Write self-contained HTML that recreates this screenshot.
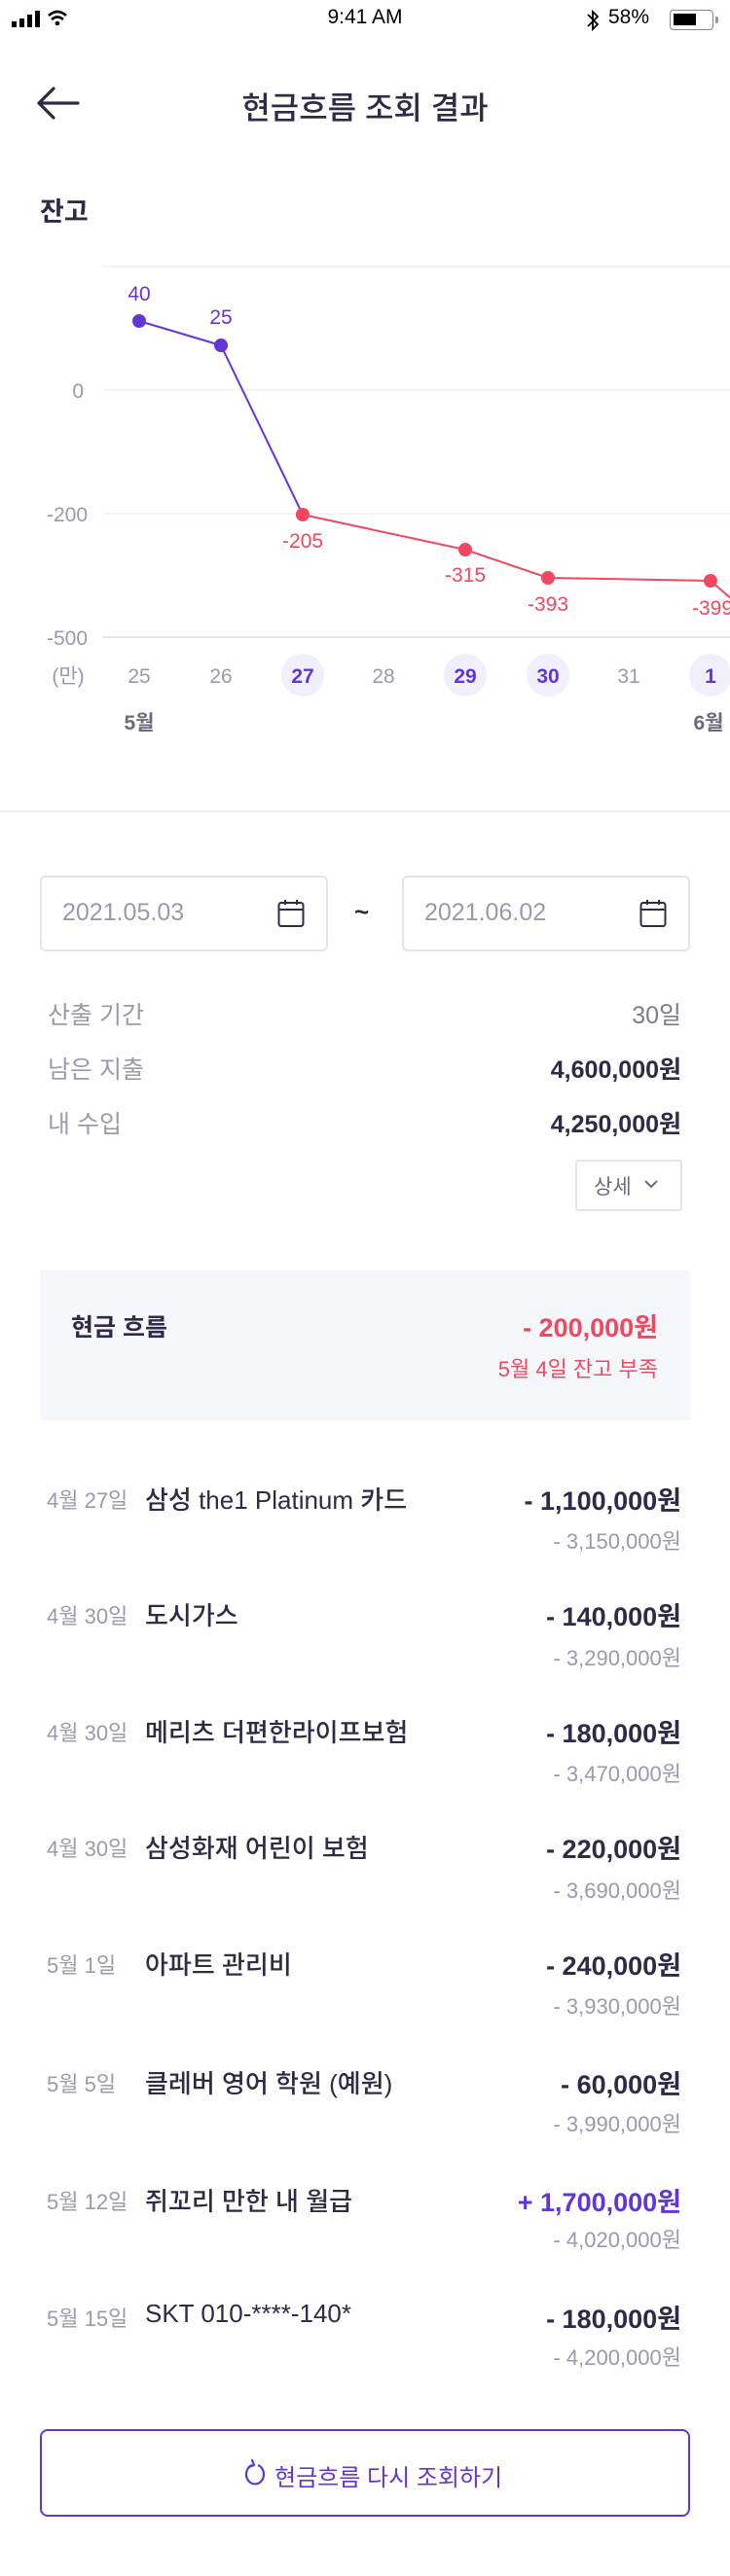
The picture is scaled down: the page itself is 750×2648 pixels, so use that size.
<!DOCTYPE html>
<html><head><meta charset="utf-8"><style>
*{margin:0;padding:0;box-sizing:border-box}
body{width:750px;height:2648px;background:#fff;position:relative;overflow:hidden;font-family:"Liberation Sans","Noto Sans CJK KR",sans-serif;color:#2d2b45}
.a{position:absolute;white-space:nowrap}
.r{text-align:right}
.c{text-align:center}
.g{color:#9b99aa}
.dk{color:#2d2b45}
.red{color:#f0485e}
.pu{color:#6236d6}
</style></head><body>
<!-- status bar -->
<svg class="a" style="left:10px;top:8px" width="70" height="24" viewBox="0 0 70 24">
<rect x="2" y="14" width="5" height="6" fill="#000"/><rect x="10" y="11" width="5" height="9" fill="#000"/><rect x="18" y="7" width="5" height="13" fill="#000"/><rect x="26" y="3" width="5" height="17" fill="#000"/>
<path d="M40 8 Q49 0 58 8" stroke="#000" stroke-width="2.6" fill="none"/><path d="M43 12 Q49 7 55 12" stroke="#000" stroke-width="2.6" fill="none"/><circle cx="49" cy="16" r="2.3" fill="#000"/>
</svg>
<div class="a c" style="left:0;width:750px;top:6px;font-size:21px;color:#000">9:41 AM</div>
<svg class="a" style="left:601px;top:9px" width="16" height="24" viewBox="0 0 16 24"><path d="M3 6 L13 16 L8 21 L8 3 L13 8 L3 18" stroke="#000" stroke-width="1.8" fill="none"/></svg>
<div class="a" style="left:625px;top:6px;font-size:21px;color:#000">58%</div>
<div class="a" style="left:688px;top:10px;width:45px;height:21px;border:1.5px solid #888;border-radius:4px"><div style="position:absolute;left:3px;top:3px;width:23px;height:12px;background:#000"></div></div>
<div class="a" style="left:735px;top:17px;width:3px;height:7px;background:#999;border-radius:0 2px 2px 0"></div>
<!-- header -->
<svg class="a" style="left:36px;top:88px" width="46" height="36" viewBox="0 0 46 36"><path d="M44 18 H4 M19 3 L4 18 L19 33" stroke="#2d2b45" stroke-width="3.2" fill="none" stroke-linecap="round" stroke-linejoin="round"/></svg>
<div class="a c" style="left:0;width:750px;top:86px;font-size:32px;font-weight:500">현금흐름 조회 결과</div>
<div class="a" style="left:41px;top:196px;font-size:27px;font-weight:bold">잔고</div>
<!-- chart -->
<svg class="a" style="left:0;top:250px" width="750" height="520" viewBox="0 250 750 520">
<g stroke="#f0f0f3" stroke-width="1.5"><line x1="106" y1="274" x2="750" y2="274"/><line x1="106" y1="401" x2="750" y2="401"/><line x1="106" y1="528" x2="750" y2="528"/></g>
<line x1="106" y1="655" x2="750" y2="655" stroke="#e4e4ea" stroke-width="2"/>
<g font-family="Liberation Sans,sans-serif" font-size="21" fill="#9b99aa" text-anchor="end"><text x="86" y="409">0</text><text x="90" y="536">-200</text><text x="90" y="663">-500</text></g>
<polyline points="143,330 227,355 311,529" stroke="#6236d6" stroke-width="2" fill="none"/>
<polyline points="311,529 478,565 563,594 730,597 752,616" stroke="#f0485e" stroke-width="2" fill="none"/>
<g fill="#6236d6"><circle cx="143" cy="330" r="7"/><circle cx="227" cy="355" r="7"/></g>
<g fill="#f0485e"><circle cx="311" cy="529" r="7"/><circle cx="478" cy="565" r="7"/><circle cx="563" cy="594" r="7"/><circle cx="730" cy="597" r="7"/></g>
<g font-family="Liberation Sans,sans-serif" font-size="21" text-anchor="middle">
<text x="143" y="309" fill="#6236d6">40</text><text x="227" y="333" fill="#6236d6">25</text>
<text x="311" y="563" fill="#f0485e">-205</text><text x="478" y="598" fill="#f0485e">-315</text><text x="563" y="628" fill="#f0485e">-393</text><text x="732" y="632" fill="#f0485e">-399</text>
</g>
<g fill="#f2effd"><circle cx="311" cy="694" r="22"/><circle cx="478" cy="694" r="22"/><circle cx="563" cy="694" r="22"/><circle cx="730" cy="694" r="22"/></g>
<g font-family="Liberation Sans,'Noto Sans CJK KR',sans-serif" font-size="21" text-anchor="middle" fill="#9b99aa">
<text x="70" y="702">(만)</text><text x="143" y="702">25</text><text x="227" y="702">26</text><text x="394" y="702">28</text><text x="646" y="702">31</text>
</g>
<g font-family="Liberation Sans,sans-serif" font-size="21" font-weight="bold" text-anchor="middle" fill="#6236d6">
<text x="311" y="702">27</text><text x="478" y="702">29</text><text x="563" y="702">30</text><text x="730" y="702">1</text>
</g>
<g font-family="Liberation Sans,'Noto Sans CJK KR',sans-serif" font-size="21" font-weight="bold" text-anchor="middle" fill="#6b6a7c"><text x="143" y="750">5월</text><text x="728" y="750">6월</text></g>
</svg>
<div class="a" style="left:0;top:833px;width:750px;height:2px;background:#f0f0f3"></div>
<!-- date range -->
<div class="a" style="left:41px;top:900px;width:296px;height:78px;border:2px solid #e4e4ea;border-radius:6px"></div>
<div class="a g" style="left:64px;top:924px;font-size:25px">2021.05.03</div>
<svg class="a" style="left:285px;top:924px" width="28" height="30" viewBox="0 0 28 30"><rect x="1.5" y="4" width="25" height="24" rx="2.5" stroke="#2d2b45" stroke-width="2" fill="none"/><line x1="1.5" y1="11" x2="26.5" y2="11" stroke="#2d2b45" stroke-width="2"/><line x1="8" y1="1" x2="8" y2="6" stroke="#2d2b45" stroke-width="2"/><line x1="20" y1="1" x2="20" y2="6" stroke="#2d2b45" stroke-width="2"/></svg>
<div class="a" style="left:364px;top:922px;font-size:26px;font-weight:bold">~</div>
<div class="a" style="left:413px;top:900px;width:296px;height:78px;border:2px solid #e4e4ea;border-radius:6px"></div>
<div class="a g" style="left:436px;top:924px;font-size:25px">2021.06.02</div>
<svg class="a" style="left:657px;top:924px" width="28" height="30" viewBox="0 0 28 30"><rect x="1.5" y="4" width="25" height="24" rx="2.5" stroke="#2d2b45" stroke-width="2" fill="none"/><line x1="1.5" y1="11" x2="26.5" y2="11" stroke="#2d2b45" stroke-width="2"/><line x1="8" y1="1" x2="8" y2="6" stroke="#2d2b45" stroke-width="2"/><line x1="20" y1="1" x2="20" y2="6" stroke="#2d2b45" stroke-width="2"/></svg>
<!-- summary -->
<div class="a g" style="left:49px;top:1024px;font-size:25px">산출 기간</div>
<div class="a g r" style="right:50px;top:1024px;font-size:25px;color:#7d7b8e">30일</div>
<div class="a g" style="left:49px;top:1080px;font-size:25px">남은 지출</div>
<div class="a r" style="right:50px;top:1080px;font-size:25px;font-weight:bold">4,600,000원</div>
<div class="a g" style="left:49px;top:1136px;font-size:25px">내 수입</div>
<div class="a r" style="right:50px;top:1136px;font-size:25px;font-weight:bold">4,250,000원</div>
<div class="a" style="left:591px;top:1192px;width:110px;height:53px;border:2px solid #e4e4ea;border-radius:3px"></div>
<div class="a" style="left:610px;top:1204px;font-size:21px;color:#6b6a7c">상세</div>
<svg class="a" style="left:661px;top:1211px" width="16" height="12" viewBox="0 0 16 12"><path d="M2 3 L8 9 L14 3" stroke="#6b6a7c" stroke-width="2" fill="none"/></svg>
<!-- cashflow box -->
<div class="a" style="left:41px;top:1306px;width:668px;height:154px;background:#f6f7fb"></div>
<div class="a" style="left:73px;top:1345px;font-size:25px;font-weight:bold">현금 흐름</div>
<div class="a r red" style="right:74px;top:1343px;font-size:27px;font-weight:bold">- 200,000원</div>
<div class="a r red" style="right:74px;top:1390px;font-size:22px">5월 4일 잔고 부족</div>
<!-- list -->
<div id="list"></div>
<div class="a g" style="left:48px;top:1525px;font-size:22px">4월 27일</div>
<div class="a dk" style="left:149px;top:1522px;font-size:26px;font-weight:500">삼성 the1 Platinum 카드</div>
<div class="a r" style="right:50px;top:1521px;font-size:27px;font-weight:bold">- 1,100,000원</div>
<div class="a r g" style="right:50px;top:1567px;font-size:22px">- 3,150,000원</div>

<div class="a g" style="left:48px;top:1644px;font-size:22px">4월 30일</div>
<div class="a dk" style="left:149px;top:1641px;font-size:26px;font-weight:500">도시가스</div>
<div class="a r" style="right:50px;top:1640px;font-size:27px;font-weight:bold">- 140,000원</div>
<div class="a r g" style="right:50px;top:1687px;font-size:22px">- 3,290,000원</div>

<div class="a g" style="left:48px;top:1764px;font-size:22px">4월 30일</div>
<div class="a dk" style="left:149px;top:1761px;font-size:26px;font-weight:500">메리츠 더편한라이프보험</div>
<div class="a r" style="right:50px;top:1760px;font-size:27px;font-weight:bold">- 180,000원</div>
<div class="a r g" style="right:50px;top:1806px;font-size:22px">- 3,470,000원</div>

<div class="a g" style="left:48px;top:1883px;font-size:22px">4월 30일</div>
<div class="a dk" style="left:149px;top:1880px;font-size:26px;font-weight:500">삼성화재 어린이 보험</div>
<div class="a r" style="right:50px;top:1879px;font-size:27px;font-weight:bold">- 220,000원</div>
<div class="a r g" style="right:50px;top:1926px;font-size:22px">- 3,690,000원</div>

<div class="a g" style="left:48px;top:2003px;font-size:22px">5월 1일</div>
<div class="a dk" style="left:149px;top:2000px;font-size:26px;font-weight:500">아파트 관리비</div>
<div class="a r" style="right:50px;top:1999px;font-size:27px;font-weight:bold">- 240,000원</div>
<div class="a r g" style="right:50px;top:2045px;font-size:22px">- 3,930,000원</div>

<div class="a g" style="left:48px;top:2125px;font-size:22px">5월 5일</div>
<div class="a dk" style="left:149px;top:2122px;font-size:26px;font-weight:500">클레버 영어 학원 (예원)</div>
<div class="a r" style="right:50px;top:2121px;font-size:27px;font-weight:bold">- 60,000원</div>
<div class="a r g" style="right:50px;top:2166px;font-size:22px">- 3,990,000원</div>

<div class="a g" style="left:48px;top:2246px;font-size:22px">5월 12일</div>
<div class="a dk" style="left:149px;top:2243px;font-size:26px;font-weight:500">쥐꼬리 만한 내 월급</div>
<div class="a r pu" style="right:50px;top:2242px;font-size:27px;font-weight:bold">+ 1,700,000원</div>
<div class="a r g" style="right:50px;top:2285px;font-size:22px">- 4,020,000원</div>

<div class="a g" style="left:48px;top:2366px;font-size:22px">5월 15일</div>
<div class="a dk" style="left:149px;top:2363px;font-size:26px;font-weight:500">SKT 010-****-140*</div>
<div class="a r" style="right:50px;top:2362px;font-size:27px;font-weight:bold">- 180,000원</div>
<div class="a r g" style="right:50px;top:2406px;font-size:22px">- 4,200,000원</div>
<!-- button -->
<div class="a" style="left:41px;top:2497px;width:668px;height:90px;border:2px solid #6236d6;border-radius:8px"></div>
<svg class="a" style="left:250px;top:2528px" width="24" height="28" viewBox="0 0 24 28"><path d="M9 6 A9 10 0 1 0 15 6" stroke="#6236d6" stroke-width="2.2" fill="none"/><path d="M9 1 L11 6 L6 8" stroke="#6236d6" stroke-width="2.2" fill="none" stroke-linecap="round"/></svg>
<div class="a pu" style="left:282px;top:2527px;font-size:24px">현금흐름 다시 조회하기</div>
</body></html>
